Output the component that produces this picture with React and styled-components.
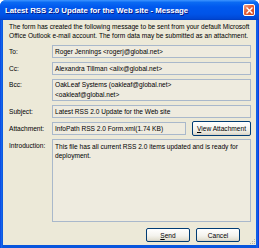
import React from "react";
import styled, { createGlobalStyle } from "styled-components";

const GlobalStyle = createGlobalStyle`
  html, body { margin: 0; padding: 0; background: #ffffff; }
  body { width: 259px; height: 248px; overflow: hidden; }
`;

const Window = styled.div`
  width: 259px;
  height: 248px;
  box-sizing: border-box;
  display: flex;
  flex-direction: column;
  background: linear-gradient(90deg, #0831d9 0px, #166aee 1px, #0855dd 3px, #0855dd 256px, #166aee 257px, #0831d9 259px);
  border-radius: 6px 6px 0 0;
  overflow: hidden;
  font-family: "Liberation Sans", Arial, sans-serif;
`;

const TitleBar = styled.div`
  height: 20px;
  flex: 0 0 20px;
  display: flex;
  align-items: center;
  justify-content: space-between;
  padding: 0 4px 0 5px;
  box-sizing: border-box;
  background: linear-gradient(180deg, #3d95ff 0%, #0a6af3 12%, #0058ee 35%, #0054e8 70%, #0048d6 92%, #003dc0 100%);
`;

const Title = styled.span`
  color: #ffffff;
  font-family: "Liberation Sans", Arial, sans-serif;
  font-weight: bold;
  font-size: 7.8px;
  text-shadow: 1px 1px 0 #0a1883;
  white-space: nowrap;
`;

const CloseButton = styled.div`
  width: 12px;
  height: 12px;
  box-sizing: border-box;
  border: 1px solid #ffffff;
  border-radius: 2px;
  background: linear-gradient(135deg, #f3a58c 0%, #e3613b 45%, #d0431a 100%);
  display: flex;
  align-items: center;
  justify-content: center;
`;

const Body = styled.div`
  flex: 1;
  margin: 0 3px 3px 3px;
  background: #ece9d8;
  padding: 2px 5px 0 6px;
  display: flex;
  flex-direction: column;
  position: relative;
  font-size: 6.6px;
  color: #000000;
`;

const Intro = styled.p`
  margin: 0;
  line-height: 9px;
  white-space: nowrap;
`;

const Form = styled.div`
  margin-top: 5px;
  display: grid;
  grid-template-columns: 43px 1fr;
  row-gap: 4px;
  align-items: start;
`;

const Label = styled.div`
  line-height: ${(p) => p.$lh || "13px"};
  padding-top: ${(p) => p.$pt || "0px"};
  white-space: nowrap;
`;

const Field = styled.div`
  box-sizing: border-box;
  border: 1px solid #a9b8cb;
  background: #eeebdf;
  padding: ${(p) => p.$pad || "0 2px"};
  line-height: ${(p) => p.$lh || "11px"};
  height: ${(p) => p.$h || "auto"};
  white-space: ${(p) => (p.$wrap ? "normal" : "nowrap")};
  overflow: hidden;
`;

const AttachRow = styled.div`
  display: flex;
  align-items: center;
  gap: 6px;
  height: 13px;
`;

const AttachField = styled(Field)`
  flex: 1;
`;

const XpButton = styled.button`
  box-sizing: border-box;
  width: ${(p) => p.$w || "44px"};
  height: ${(p) => p.$h || "14px"};
  padding: 0;
  border: 1px solid #003c74;
  border-radius: 2px;
  background: linear-gradient(180deg, #ffffff 0%, #f4f3ee 55%, #e6e3d6 85%, #d6d0c5 100%);
  font-family: "Liberation Sans", Arial, sans-serif;
  font-size: 6.6px;
  line-height: 11px;
  color: #000000;
  white-space: nowrap;
  u { text-decoration: underline; }
`;

const ButtonBar = styled.div`
  margin-top: 6px;
  padding-right: 11px;
  display: flex;
  justify-content: flex-end;
  gap: 6px;
`;

const Grip = styled.svg`
  position: absolute;
  right: 0;
  bottom: 0;
`;

export default function App() {
  return (
    <>
      <GlobalStyle />
      <Window>
        <TitleBar>
          <Title>Latest RSS 2.0 Update for the Web site - Message</Title>
          <CloseButton>
            <svg width="7" height="7" viewBox="0 0 7 7">
              <path d="M1 1 L6 6 M6 1 L1 6" stroke="#ffffff" strokeWidth="1.4" strokeLinecap="square" />
            </svg>
          </CloseButton>
        </TitleBar>
        <Body>
          <Intro>The form has created the following message to be sent from your default Microsoft</Intro>
          <Intro>Office Outlook e-mail account. The form data may be submitted as an attachment.</Intro>
          <Form>
            <Label>To:</Label>
            <Field>Roger Jennings &lt;rogerj@global.net&gt;</Field>
            <Label>Cc:</Label>
            <Field>Alexandra Tillman &lt;alix@global.net&gt;</Field>
            <Label $lh="10px" $pt="1px">Bcc:</Label>
            <Field $lh="10px" $wrap>
              OakLeaf Systems (oakleaf@global.net&gt;
              <br />
              &lt;oakleaf@global.net&gt;
            </Field>
            <Label>Subject:</Label>
            <Field>Latest RSS 2.0 Update for the Web site</Field>
            <Label $lh="13px">Attachment:</Label>
            <AttachRow>
              <AttachField>InfoPath RSS 2.0 Form.xml(1.74 KB)</AttachField>
              <XpButton $w="59px" $h="15px">
                <u>V</u>iew Attachment
              </XpButton>
            </AttachRow>
            <Label $lh="9px" $pt="2px">Introduction:</Label>
            <Field $lh="9px" $h="83px" $wrap $pad="2px 2px 0">
              This file has all current RSS 2.0 items updated and is ready for deployment.
            </Field>
          </Form>
          <ButtonBar>
            <XpButton>
              <u>S</u>end
            </XpButton>
            <XpButton>Cancel</XpButton>
          </ButtonBar>
          <Grip width="7" height="7" viewBox="0 0 7 7">
            <rect x="5" y="1" width="1" height="1" fill="#b8b4a2" />
            <rect x="3" y="3" width="1" height="1" fill="#b8b4a2" />
            <rect x="5" y="3" width="1" height="1" fill="#b8b4a2" />
            <rect x="1" y="5" width="1" height="1" fill="#b8b4a2" />
            <rect x="3" y="5" width="1" height="1" fill="#b8b4a2" />
            <rect x="5" y="5" width="1" height="1" fill="#b8b4a2" />
          </Grip>
        </Body>
      </Window>
    </>
  );
}
